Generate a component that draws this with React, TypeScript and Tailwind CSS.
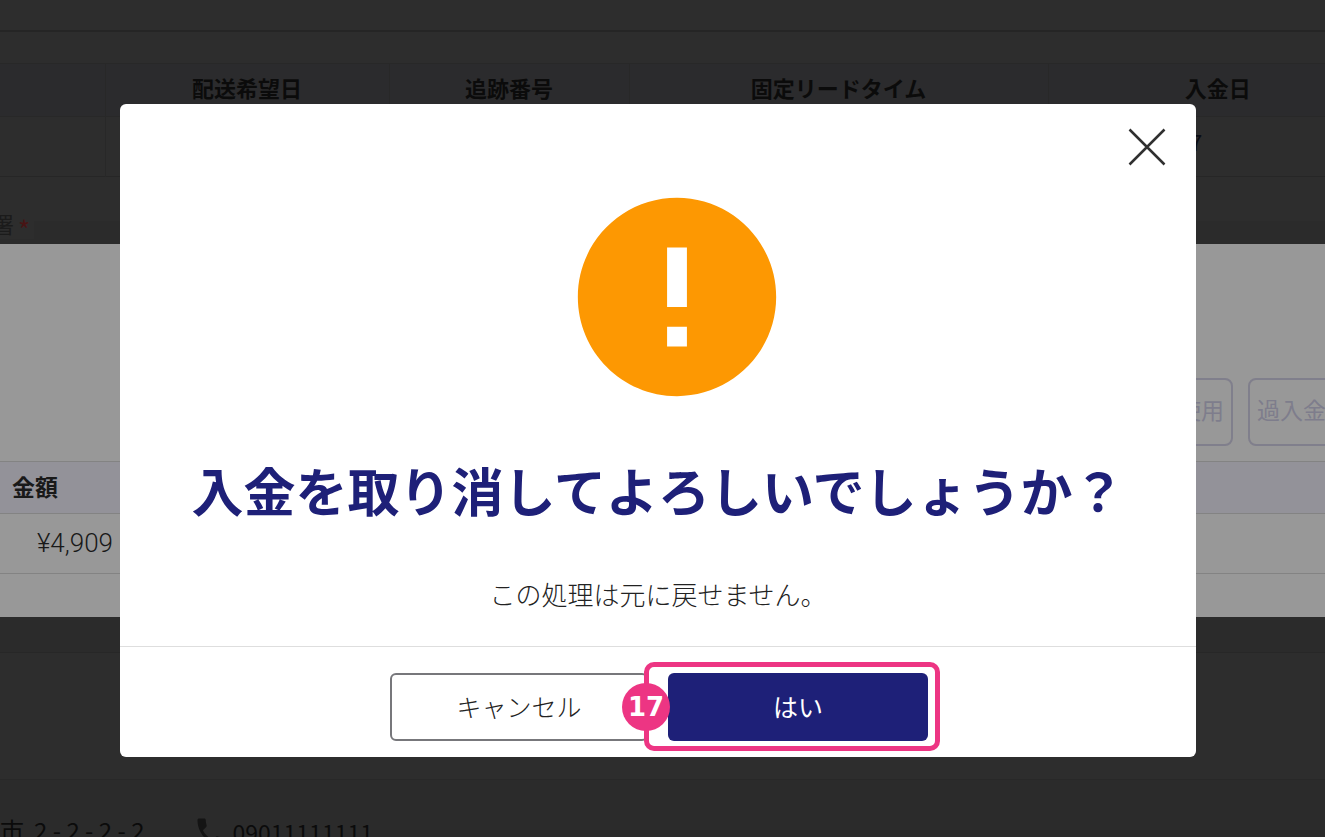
import { useState } from "react";
import { MdError, MdPhone } from "react-icons/md";

interface ConfirmDialogProps {
  title: string;
  description: string;
  step: number;
  onClose: () => void;
}

function OrderPage() {
  return (
    <div className="flex min-h-screen flex-col bg-[#2d2d2d] text-[22px] leading-8 text-[#0b0b0b]">
      <header className="h-8 border-b-2 border-[#252525]" />

      {/* Shipping table */}
      <div className="overflow-hidden pt-[31px]">
        <table className="w-[105%] table-fixed border-collapse">
          <thead>
            <tr className="h-[53px] border-y border-[#282828] bg-[#2b2b2d]">
              <th className="w-[105px] border-r border-[#282828]" />
              <th className="w-[284px] border-r border-[#282828] pb-1.5 font-bold">
                配送希望日
              </th>
              <th className="w-[240px] border-r border-[#282828] pb-1.5 font-bold">
                追跡番号
              </th>
              <th className="w-[419px] border-r border-[#282828] pb-1.5 font-bold">
                固定リードタイム
              </th>
              <th className="pr-1 pb-1.5 font-bold">入金日</th>
            </tr>
          </thead>
          <tbody>
            <tr className="h-[60px] border-b border-[#262626]">
              <td className="border-r border-[#282828]" />
              <td />
              <td />
              <td />
              <td className="pb-3 pl-[142px] text-[#0a0c14]">7</td>
            </tr>
          </tbody>
        </table>
      </div>

      {/* Department field */}
      <div className="mt-11 h-[432px] border-b border-[#272727] bg-[#2b2b2b]">
        <div className="-mt-[14px] flex h-8 items-center">
          <span className="-ml-2 flex items-center gap-1 bg-[#2d2d2d] pr-1 text-[#1b1b1b]">
            署
            <span className="pt-3 text-[26px] leading-5 text-[#481414]">
              *
            </span>
          </span>
        </div>
      </div>

      <div className="h-[127px] border-b border-[#282828]" />

      {/* Recipient */}
      <div className="flex h-[57px] items-start gap-12 overflow-hidden bg-[#2b2b2b] pt-[34px]">
        <span className="flex gap-[10px] text-[24px]">
          <span>市</span>
          <span>2 - 2 - 2 - 2</span>
        </span>
        <span className="flex items-center gap-1 text-[23px]">
          <MdPhone className="size-9 text-[#141414]" />
          09011111111
        </span>
      </div>
    </div>
  );
}

function PaymentPanel() {
  return (
    <section className="w-full overflow-hidden bg-[#989898] pt-[134px] pb-[43px] text-[#191919]">
      <div className="-mr-[83px] flex justify-end gap-[15px] text-[23px] text-[#7e7d8c]">
        <button
          type="button"
          disabled
          className="h-[68px] w-[160px] rounded-lg border-2 border-[#807f8c] px-[7px] pb-1.5 text-right"
        >
          使用
        </button>
        <button
          type="button"
          disabled
          className="h-[68px] w-[160px] rounded-lg border-2 border-[#807f8c] px-[7px] pb-1.5 text-left"
        >
          過入金
        </button>
      </div>
      <table className="mt-[15px] w-full border-collapse">
        <thead>
          <tr className="h-[52px] border-y border-[#838383] bg-[#939299]">
            <th className="w-[121px] pb-0.5 pl-3 text-left text-[23px] font-bold">
              金額
            </th>
            <th />
          </tr>
        </thead>
        <tbody>
          <tr className="h-[60px] border-b border-[#838383]">
            <td className="pr-2 text-right font-[Roboto] text-[26px] font-light">
              ¥4,909
            </td>
            <td />
          </tr>
        </tbody>
      </table>
    </section>
  );
}

function ConfirmDialog({
  title,
  description,
  step,
  onClose,
}: ConfirmDialogProps) {
  return (
    <div
      role="dialog"
      aria-modal="true"
      aria-labelledby="dialog-title"
      className="relative w-full rounded-md bg-white text-[#222222]"
    >
      <button
        type="button"
        aria-label="閉じる"
        onClick={onClose}
        className="absolute top-6 right-[30px]"
      >
        <svg viewBox="0 0 38 38" className="size-[38px]">
          <path
            d="M1.5 1.5 36.5 36.5M36.5 1.5 1.5 36.5"
            stroke="#303030"
            strokeWidth="2.5"
          />
        </svg>
      </button>

      <div className="flex flex-col items-center pt-[74px] pb-9 text-center">
        <MdError className="ml-[38px] size-[238px] text-[#fd9802]" />
        <h1
          id="dialog-title"
          className="mt-[42px] text-[52px] leading-16 font-bold text-[#1e2078]"
        >
          {title}
        </h1>
        <p className="mt-14 text-[26px] leading-8 font-light">{description}</p>
      </div>

      {/* Dialog actions */}
      <div className="flex justify-center gap-5 border-t border-[#dedede] pt-[26px] pb-4 pl-0.5 text-[25px] font-light">
        <button
          type="button"
          onClick={onClose}
          className="h-[68px] w-[258px] rounded-md border-2 border-[#77777b]"
        >
          キャンセル
        </button>
        <div className="relative">
          <button
            type="button"
            onClick={onClose}
            className="h-[68px] w-[260px] rounded-md bg-[#1e2078] font-normal text-white"
          >
            はい
          </button>
          {/* Step marker */}
          <div className="pointer-events-none absolute -top-[11px] -right-3 -bottom-[10px] -left-6 rounded-[10px] border-5 border-[#ed3583]" />
          <span className="pointer-events-none absolute top-[10px] -left-[46px] flex size-12 items-center justify-center rounded-full bg-[#ed3583] font-['DejaVu_Sans'] text-[26px] leading-8 font-bold text-white">
            {step}
          </span>
        </div>
      </div>
    </div>
  );
}

export default function App() {
  const [isOpen, setIsOpen] = useState(true);

  return (
    <div className="relative h-screen overflow-hidden font-['Noto_Sans_CJK_JP',sans-serif]">
      <OrderPage />
      <div className="absolute inset-0 flex items-center pt-6">
        <PaymentPanel />
      </div>
      {isOpen && (
        <div className="absolute inset-0 flex items-center pt-6 pr-[129px] pl-30">
          <ConfirmDialog
            title="入金を取り消してよろしいでしょうか？"
            description="この処理は元に戻せません。"
            step={17}
            onClose={() => setIsOpen(false)}
          />
        </div>
      )}
    </div>
  );
}
